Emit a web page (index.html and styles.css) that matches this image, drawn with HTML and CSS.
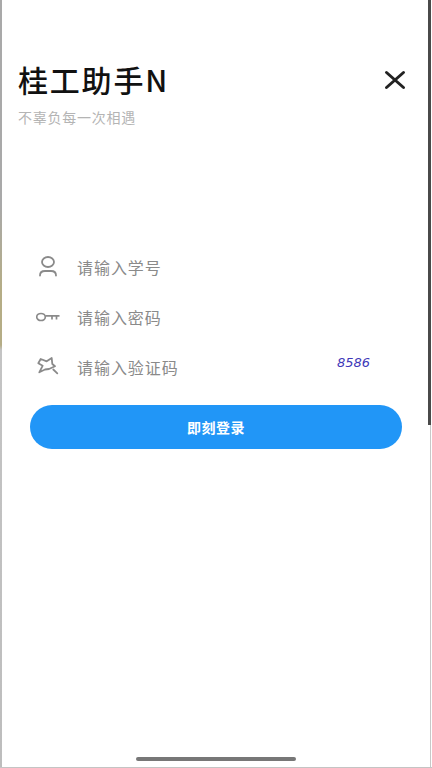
FILE: index.html
```html
<!DOCTYPE html>
<html lang="zh-CN">
<head>
    <meta charset="UTF-8">
    <meta name="viewport" content="width=device-width, initial-scale=1.0">
    <title>桂工助手N</title>
    <link rel="stylesheet" href="styles.css">
</head>
<body>
    <div class="page">
        <header class="top">
            <div class="top-text">
                <h1>桂工助手N</h1>
                <p>不辜负每一次相遇</p>
            </div>
            <svg class="close" xmlns="http://www.w3.org/2000/svg" viewBox="0 0 22 20" width="22" height="20">
                <path d="M2.500,2.500 L19.500,17.500 M19.500,2.500 L2.500,17.500" stroke="#222" stroke-width="3" fill="none" stroke-linecap="round"/>
            </svg>
        </header>

        <form class="login">
            <div class="field">
                <svg class="field-icon" xmlns="http://www.w3.org/2000/svg" viewBox="0 0 24 24" width="24" height="24">
                    <ellipse cx="12" cy="7" rx="6" ry="5" stroke="#8a8a8a" stroke-width="1.800" fill="none"/>
                    <path d="M4,20.500 C4,17.500 6,16 9,16 L15,16 C18,16 20,17.500 20,20.500" stroke="#8a8a8a" stroke-width="1.800" fill="none" stroke-linecap="round"/>
                </svg>
                <span class="placeholder">请输入学号</span>
            </div>
            <div class="field">
                <svg class="field-icon" xmlns="http://www.w3.org/2000/svg" viewBox="0 0 24 24" width="24" height="24">
                    <ellipse cx="5" cy="12" rx="4.300" ry="3.500" stroke="#8a8a8a" stroke-width="1.700" fill="none"/>
                    <path d="M9.500,10.800 L23.500,10.800 M16,10.800 L16,14.500 M20.500,10.800 L20.500,14.500" stroke="#8a8a8a" stroke-width="1.700" fill="none"/>
                </svg>
                <span class="placeholder">请输入密码</span>
            </div>
            <div class="field">
                <svg class="field-icon" xmlns="http://www.w3.org/2000/svg" viewBox="0 0 24 24" width="24" height="24">
                    <path d="M4.700,4 L10.700,6.300 L15.700,3 L16.300,9 L19,11.300 L13,14 L9,14.500 L3.300,17.300 L6.700,10.700 L2.300,8.300 Z M17.300,14.500 L21.300,18.300" stroke="#8a8a8a" stroke-width="1.800" fill="none" stroke-linejoin="round" stroke-linecap="round"/>
                </svg>
                <span class="placeholder">请输入验证码</span>
                <span class="captcha">8586</span>
            </div>
            <button class="btn-login" type="button">即刻登录</button>
        </form>

        <div class="home-bar"></div>
    </div>
</body>
</html>
```
FILE: styles.css
```css
/* Reset and Base Styles */
* {
    margin: 0;
    padding: 0;
    box-sizing: border-box;
}

body {
    font-family: "Noto Sans CJK SC", "Noto Sans", sans-serif;
    background-color: #fff;
}

/* Page */
.page {
    position: relative;
    display: flex;
    flex-direction: column;
    height: 768px;
    padding: 60px 26px 0 18px;
    overflow: hidden;
    border-bottom: 1px solid #c4c4c4;
}

/* Device edges, they lie over the page */
.page::before {
    content: "";
    position: absolute;
    top: 0;
    bottom: 0;
    left: 0;
    width: 2px;
    background: linear-gradient(to bottom, #a9a9a9 0, #a9a9a9 205px, #b5ad86 290px, #b5ad86 345px, #c4c4c4 350px, #bdbdbd 100%);
}

.page::after {
    content: "";
    position: absolute;
    top: 0;
    bottom: 0;
    right: 1px;
    width: 3px;
    background:
        linear-gradient(#4a4a4a, #4a4a4a) top / 100% 425px no-repeat,
        linear-gradient(#c8c8c8, #c8c8c8) right / 1px 100% no-repeat;
}

/* Header */
.top {
    display: flex;
    justify-content: space-between;
    align-items: flex-start;
}

.top h1 {
    font-size: 30px;
    font-weight: 500;
    line-height: 38px;
    letter-spacing: 1.800px;
    color: #111;
}

.top p {
    margin-top: 9px;
    font-size: 14px;
    line-height: 20px;
    letter-spacing: 0.750px;
    color: #b4b4b4;
}

.close {
    margin-top: 10px;
}

/* Login form */
.login {
    display: flex;
    flex-direction: column;
    margin-top: 115px;
    padding-left: 12px;
}

.field {
    display: flex;
    align-items: center;
    height: 50px;
    padding-left: 6px;
}

.field-icon {
    flex-shrink: 0;
}

.placeholder {
    margin-left: 17px;
    font-size: 16px;
    letter-spacing: 0.950px;
    color: #8a8a8a;
}

.captcha {
    margin-left: auto;
    margin-right: 36px;
    margin-top: -10px;
    font-family: "DejaVu Sans", sans-serif;
    font-size: 13px;
    font-style: italic;
    color: #4038b8;
}

.btn-login {
    width: 372px;
    height: 44px;
    margin-top: 13px;
    border: none;
    border-radius: 22px;
    background-color: #2196f7;
    color: #fff;
    font-family: inherit;
    font-size: 14px;
    font-weight: 700;
    letter-spacing: 0.500px;
}

/* Home indicator */
.home-bar {
    width: 160px;
    height: 4px;
    margin: auto 0 6px 118px;
    border-radius: 2px;
    background-color: #777;
}
```
